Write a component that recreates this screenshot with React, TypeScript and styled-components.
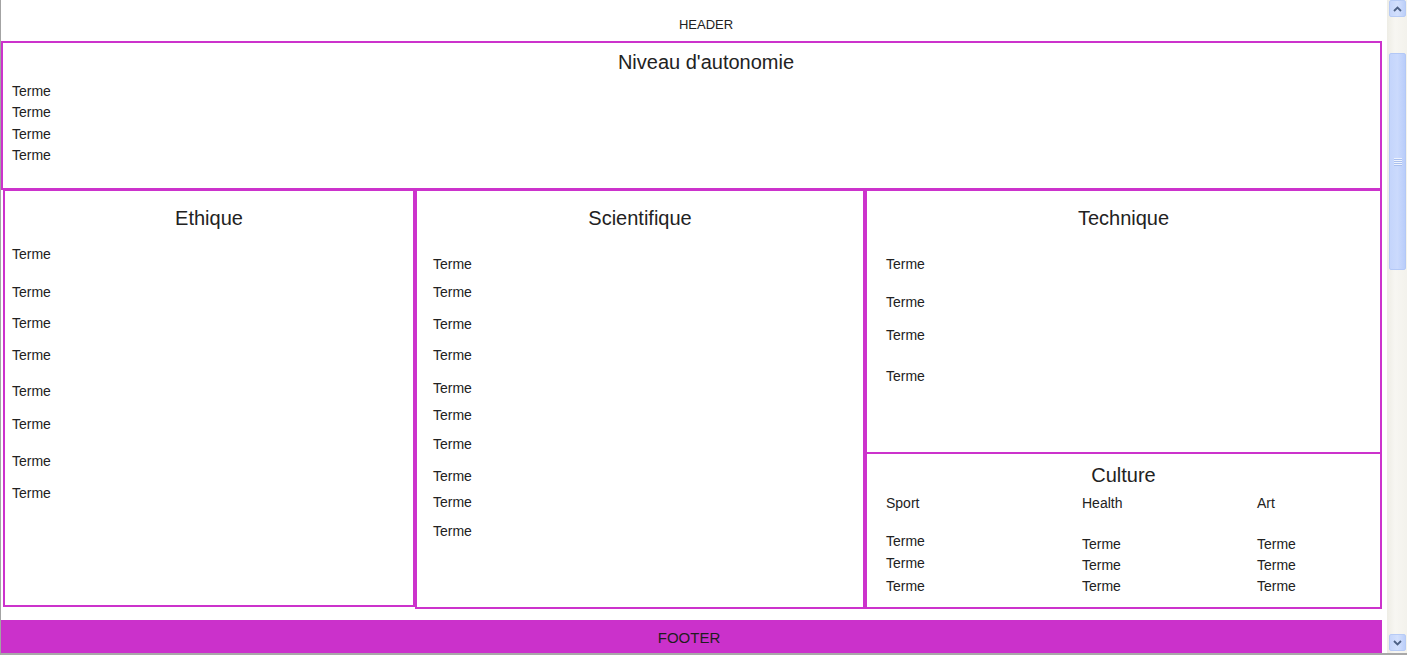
import React from "react";
import styled, { createGlobalStyle } from "styled-components";

const Global = createGlobalStyle`
  html, body {
    margin: 0;
    padding: 0;
    overflow: hidden;
    background: #fff;
  }
  body {
    font-family: "Liberation Sans", Arial, sans-serif;
    color: #222;
  }
`;

const PINK = "#cc33cc";

const Frame = styled.div`
  display: flex;
  height: 100vh;
  box-sizing: border-box;
  border-left: 1px solid #a3a3a3;
  border-bottom: 2px solid #a8a8a8;
`;

const Page = styled.main`
  flex: 1;
  min-width: 0;
  display: flex;
  flex-direction: column;
  padding-right: 5px;
`;

const Header = styled.header`
  height: 41px;
  box-sizing: border-box;
  padding: 17px 0 0 29px;
  font-size: 13px;
  line-height: 16px;
  text-align: center;
`;

const Panel = styled.section<{ $w?: number; $h: number; $noBottom?: boolean }>`
  box-sizing: border-box;
  border: 2px solid ${PINK};
  ${({ $noBottom }) => ($noBottom ? "border-bottom: none;" : "")}
  width: ${({ $w }) => ($w ? `${$w}px` : "auto")};
  height: ${({ $h }) => $h}px;
  flex-shrink: 0;
`;

const Title = styled.h2<{ $mt: number; $shift?: number }>`
  margin: ${({ $mt }) => $mt}px 0 0;
  padding-left: ${({ $shift }) => $shift || 0}px;
  font-size: 20px;
  line-height: 24px;
  font-weight: 400;
  text-align: center;
`;

const List = styled.div<{ $pl: number; $lh?: number; $mt?: number }>`
  padding-left: ${({ $pl }) => $pl}px;
  margin-top: ${({ $mt }) => $mt || 0}px;
  font-size: 14px;
  line-height: ${({ $lh }) => $lh || 16}px;
`;

const Term = styled.div<{ $mt?: number }>`
  margin-top: ${({ $mt }) => $mt || 0}px;
`;

const Row = styled.div`
  display: flex;
  align-items: flex-start;
  margin-top: -1px;
  padding-left: 2px;
`;

const Stack = styled.div`
  display: flex;
  flex-direction: column;
  width: 517px;
  height: 420px;
  flex-shrink: 0;
`;

const CultureGrid = styled.div`
  display: grid;
  grid-template-columns: 196px 175px 1fr;
  padding-left: 19px;
  margin-top: 8px;
  font-size: 14px;
  line-height: 16px;
`;

const CultureCol = styled.div`
  display: flex;
  flex-direction: column;
`;

const Footer = styled.footer`
  margin-top: 11px;
  height: 33px;
  box-sizing: border-box;
  padding: 3px 5px 0 0;
  background: #cb31cb;
  font-size: 15px;
  line-height: 30px;
  text-align: center;
  color: #1e1e1e;
`;

/* fake classic scrollbar on the right edge */
const Scrollbar = styled.aside`
  width: 20px;
  box-sizing: border-box;
  padding: 0 1px 2px 2px;
  display: flex;
  flex-direction: column;
  background: linear-gradient(to right, #eeede5, #f7f6f2 40%, #f3f2ec);
`;

const ArrowButton = styled.div<{ $auto?: boolean }>`
  height: 17px;
  margin-top: ${({ $auto }) => ($auto ? "auto" : "0")};
  box-sizing: border-box;
  border: 1px solid #b7cbf5;
  border-radius: 2px;
  background: linear-gradient(to right, #c6d6fb, #d3e0fd 50%, #bccff9);
  display: flex;
  align-items: center;
  justify-content: center;
`;

const Thumb = styled.div`
  margin-top: 36px;
  height: 217px;
  box-sizing: border-box;
  border: 1px solid #b3c8f6;
  border-radius: 2px;
  background: linear-gradient(to right, #c4d5fc, #cbdafd 50%, #b9cdfa);
  display: flex;
  align-items: center;
  justify-content: center;
`;

const Chevron = ({ up }: { up?: boolean }): JSX.Element => (
  <svg width="9" height="6" viewBox="0 0 9 6">
    <polyline
      points={up ? "1,5 4.5,1.5 8,5" : "1,1 4.5,4.5 8,1"}
      fill="none"
      stroke="#4d6185"
      strokeWidth="1.8"
    />
  </svg>
);

const Grip = (): JSX.Element => (
  <svg width="8" height="8" viewBox="0 0 8 8">
    {[0.5, 2.5, 4.5, 6.5].map((y) => (
      <line key={y} x1="0" x2="8" y1={y} y2={y} stroke="#eef3fe" strokeWidth="1" />
    ))}
    {[1.5, 3.5, 5.5, 7.5].map((y) => (
      <line key={y} x1="0" x2="8" y1={y} y2={y} stroke="#a9bfee" strokeWidth="1" />
    ))}
  </svg>
);

const ethique = [16, 22, 15, 16, 20, 17, 21, 16];
const scientifique = [26, 12, 16, 15, 17, 11, 13, 16, 10, 13];
const technique = [26, 22, 17, 25];

const culture = [
  { name: "Sport", gaps: [22, 6, 7] },
  { name: "Health", gaps: [25, 5, 5] },
  { name: "Art", gaps: [25, 5, 5] },
];

export default function App(): JSX.Element {
  return (
    <>
      <Global />
      <Frame>
        <Page>
          <Header>HEADER</Header>

          <Panel $h={149}>
            <Title $mt={7} $shift={29}>
              Niveau d'autonomie
            </Title>
            <List $pl={9} $lh={21.4} $mt={7}>
              {[0, 1, 2, 3].map((i) => (
                <Term key={i}>Terme</Term>
              ))}
            </List>
          </Panel>

          <Row>
            <Panel $w={412} $h={418}>
              <Title $mt={15}>Ethique</Title>
              <List $pl={7}>
                {ethique.map((mt, i) => (
                  <Term key={i} $mt={mt}>
                    Terme
                  </Term>
                ))}
              </List>
            </Panel>

            <Panel $w={450} $h={420}>
              <Title $mt={15}>Scientifique</Title>
              <List $pl={16}>
                {scientifique.map((mt, i) => (
                  <Term key={i} $mt={mt}>
                    Terme
                  </Term>
                ))}
              </List>
            </Panel>

            <Stack>
              <Panel $h={263} $noBottom>
                <Title $mt={15}>Technique</Title>
                <List $pl={19}>
                  {technique.map((mt, i) => (
                    <Term key={i} $mt={mt}>
                      Terme
                    </Term>
                  ))}
                </List>
              </Panel>
              <Panel $h={157}>
                <Title $mt={9}>Culture</Title>
                <CultureGrid>
                  {culture.map((c) => (
                    <CultureCol key={c.name}>
                      <div>{c.name}</div>
                      {c.gaps.map((mt, i) => (
                        <Term key={i} $mt={mt}>
                          Terme
                        </Term>
                      ))}
                    </CultureCol>
                  ))}
                </CultureGrid>
              </Panel>
            </Stack>
          </Row>

          <Footer>FOOTER</Footer>
        </Page>

        <Scrollbar>
          <ArrowButton>
            <Chevron up />
          </ArrowButton>
          <Thumb>
            <Grip />
          </Thumb>
          <ArrowButton $auto>
            <Chevron />
          </ArrowButton>
        </Scrollbar>
      </Frame>
    </>
  );
}
